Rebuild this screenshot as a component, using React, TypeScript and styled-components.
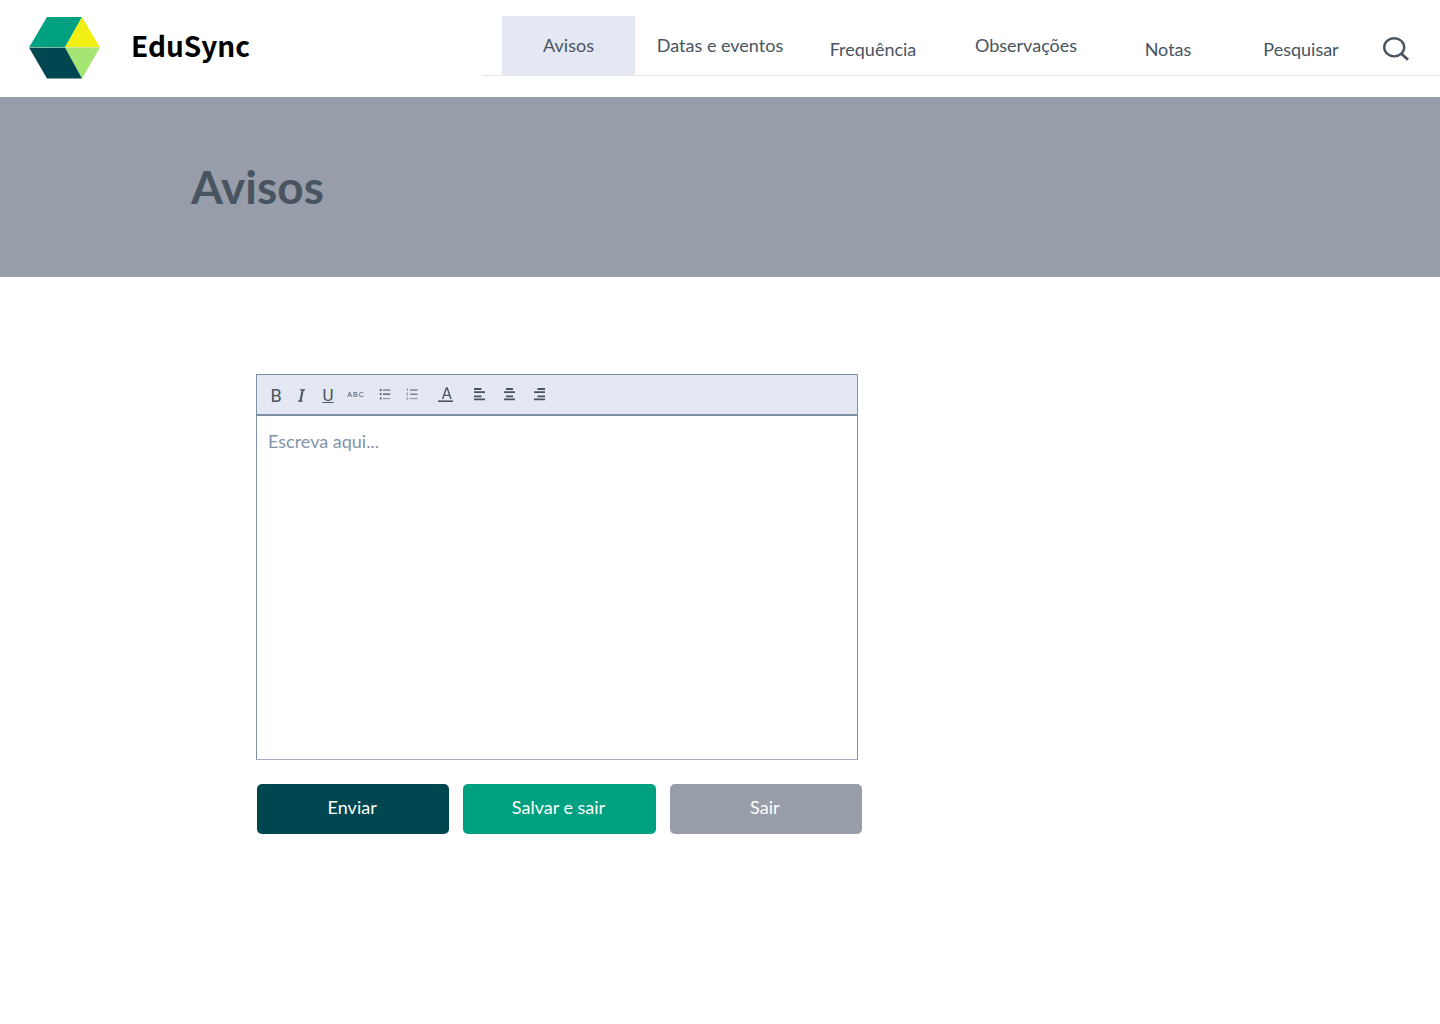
import React from "react";
import styled, { createGlobalStyle } from "styled-components";

const ink = "#485460";
const slate = "#979da9";
const mist = "#e4e8f2";

const GlobalStyle = createGlobalStyle`
  *, *::before, *::after { box-sizing: border-box; }
  body {
    margin: 0;
    background: #fff;
    color: ${ink};
    font-family: Lato, "Liberation Sans", sans-serif;
    font-size: 18px;
    line-height: 24px;
  }
  button, textarea { font: inherit; }
`;

const Header = styled.header`
  display: flex;
  align-items: flex-start;
  height: 97px;
  padding-top: 16px;
`;

const Brand = styled.a`
  display: flex;
  align-items: center;
  flex: 0 1 483px;
  gap: 31px;
  padding-left: 29px;
  color: #000;
  text-decoration: none;
`;

const BrandName = styled.span`
  font-family: "Noto Sans CJK SC", "Noto Sans", sans-serif;
  font-size: 28px;
  font-weight: 700;
  line-height: 40px;
  padding-bottom: 6px;
`;

const Nav = styled.nav`
  flex: 1;
  display: grid;
  grid-template-columns: 133fr 170fr 136fr 170fr 114fr 152fr 63fr;
  height: 60px;
  padding-left: 19px;
  border-bottom: 1px solid ${mist};
`;

const NavLink = styled.a<{ $active?: boolean; $low?: boolean }>`
  display: flex;
  align-items: center;
  justify-content: center;
  padding: ${(p) => (p.$low ? "6px 0 0" : "0 0 2px")};
  background: ${(p) => (p.$active ? mist : "transparent")};
  color: ${ink};
  text-decoration: none;
  white-space: nowrap;
`;

const SearchButton = styled.button`
  display: flex;
  align-items: center;
  padding: 6px 0 0 6px;
  border: 0;
  background: none;
  color: ${ink};
  cursor: pointer;
`;

const Banner = styled.section`
  display: flex;
  align-items: center;
  height: 180px;
  padding: 0 191px;
  background: ${slate};
`;

const Title = styled.h1`
  margin: 0;
  font-size: 46px;
  font-weight: 700;
  line-height: 56px;
`;

const Main = styled.main`
  padding: 97px 24px 48px 256px;
`;

const Editor = styled.form`
  display: flex;
  flex-direction: column;
  max-width: 606px;
`;

const Toolbar = styled.div`
  display: flex;
  align-items: center;
  width: 602px;
  max-width: 100%;
  height: 41px;
  padding: 0 0 2px 6px;
  border: 1px solid #7c90a6;
  background: ${mist};
`;

const Tool = styled.button<{ $width: number }>`
  display: flex;
  align-items: center;
  justify-content: center;
  flex: 0 0 ${(p) => p.$width}px;
  height: 32px;
  padding: 0;
  border: 0;
  background: none;
  color: ${ink};
  cursor: pointer;
`;

const Letter = styled.span<{ $underline?: boolean }>`
  font-family: Roboto, "Liberation Sans", sans-serif;
  font-size: ${(p) => (p.$underline ? 17 : 18)}px;
  line-height: 16px;
  padding-top: ${(p) => (p.$underline ? 2 : 4)}px;
  text-decoration: ${(p) => (p.$underline ? "underline" : "none")};
  text-decoration-thickness: 1px;
  text-underline-offset: 1px;
`;

const Spelling = styled.span`
  font-family: "Liberation Sans", sans-serif;
  font-size: 7px;
  line-height: 8px;
  letter-spacing: 1px;
  padding-top: 2px;
`;

const Message = styled.textarea`
  width: 602px;
  max-width: 100%;
  height: 345px;
  padding: 13px 11px;
  border: 1px solid #7c90a6;
  border-bottom-color: #a3adbf;
  border-radius: 0;
  background: #fff;
  color: ${ink};
  resize: none;
  outline: none;
  &::placeholder { color: #8294a8; opacity: 1; }
`;

const Actions = styled.div`
  display: flex;
  gap: 14px;
  margin-top: 24px;
  padding-left: 1px;
`;

const Action = styled.button<{ $color: string }>`
  flex: 1 1 0;
  height: 50px;
  padding: 0 2px 4px 0;
  border: 0;
  border-radius: 5px;
  background: ${(p) => p.$color};
  color: #fff;
  cursor: pointer;
`;

const Logo = () => (
  <svg width="71" height="63" viewBox="0 0 71 63" aria-hidden="true">
    <path d="M18 1H53L36 31.5H0Z" fill="#00a180" />
    <path d="M53 1L71 31.5H36Z" fill="#f2ef12" />
    <path d="M36 31.5H71L53 62.5Z" fill="#a5e573" />
    <path d="M0 31.5H36L53 62.5H18Z" fill="#004650" />
    <path d="M0 31.5H71" stroke="#d5e8c8" strokeOpacity="0.45" />
  </svg>
);

const SearchIcon = () => (
  <svg width="26" height="24" viewBox="0 0 26 24" fill="none" stroke="currentColor" strokeWidth="2.4" aria-hidden="true">
    <ellipse cx="11.2" cy="10.3" rx="10" ry="9.1" />
    <path d="M18.4 16.7L25 22.8" strokeWidth="2.8" />
  </svg>
);

const ItalicIcon = () => (
  <svg width="8" height="16" viewBox="0 0 8 16" fill="none" stroke="currentColor" aria-hidden="true">
    <path d="M2 3.8H7M0 15.2H4.6" strokeWidth="1.2" />
    <path d="M4.8 3.8L2.4 15.2" strokeWidth="2" />
  </svg>
);

const BulletIcon = () => (
  <svg width="12" height="12" viewBox="0 0 12 12" fill="currentColor" aria-hidden="true">
    <circle cx="1.7" cy="2" r="1.1" />
    <circle cx="1.7" cy="6" r="1.1" />
    <circle cx="1.7" cy="10.5" r="1" />
    <path d="M4 1.5H11.3V2.5H4ZM4 5.6H11.3V6.7H4Z" />
    <path d="M4 10.1H11.3V11.1H4Z" opacity="0.65" />
  </svg>
);

const NumberedIcon = () => (
  <svg width="12" height="12" viewBox="0 0 12 12" fill="none" stroke="currentColor" aria-hidden="true">
    <path d="M0.7 0.8H1.5V3M0.6 5H1.9L0.8 7H2M0.6 9.5H1.8V11.5H0.6" strokeWidth="0.5" />
    <path d="M4 2H11.5M4 6.2H11.5" />
    <path d="M4 10.6H11.5" opacity="0.6" />
  </svg>
);

const ColorIcon = () => (
  <svg width="15" height="16" viewBox="0 0 15 16" fill="none" stroke="currentColor" aria-hidden="true">
    <path d="M4.6 13L8.4 2H9.2L13 13M5.8 9.4H11.8" strokeWidth="1.4" />
    <path d="M0 15.2H15" strokeWidth="1.6" />
  </svg>
);

const alignPaths = {
  left: "M0 2H7.5M0 5.2H11M0 9.3H7.5M0 12.3H11",
  center: "M2 2H9M0 5.2H11M2 9.3H9M0 12.3H11",
  right: "M3.5 2H11M0 5.2H11M3.5 9.3H11M0 12.3H11",
};

const AlignIcon = ({ side }: { side: keyof typeof alignPaths }) => (
  <svg width="11" height="14" viewBox="0 0 11 14" fill="none" stroke="currentColor" strokeWidth="1.8" aria-hidden="true">
    <path d={alignPaths[side]} />
  </svg>
);

const links = [
  { label: "Avisos", active: true },
  { label: "Datas e eventos" },
  { label: "Frequência", low: true },
  { label: "Observações" },
  { label: "Notas", low: true },
  { label: "Pesquisar", low: true },
];

const tools = [
  { name: "Negrito", width: 26, icon: <Letter>B</Letter> },
  { name: "Itálico", width: 26, icon: <ItalicIcon /> },
  { name: "Sublinhado", width: 26, icon: <Letter $underline>U</Letter> },
  { name: "Ortografia", width: 30, icon: <Spelling>ABC</Spelling> },
  { name: "Lista", width: 28, icon: <BulletIcon /> },
  { name: "Lista numerada", width: 26, icon: <NumberedIcon /> },
  { name: "Cor do texto", width: 40, icon: <ColorIcon /> },
  { name: "Alinhar à esquerda", width: 28, icon: <AlignIcon side="left" /> },
  { name: "Centralizar", width: 32, icon: <AlignIcon side="center" /> },
  { name: "Alinhar à direita", width: 28, icon: <AlignIcon side="right" /> },
];

export default function App() {
  return (
    <>
      <GlobalStyle />
      <Header>
        <Brand href="#">
          <Logo />
          <BrandName>EduSync</BrandName>
        </Brand>
        <Nav>
          {links.map((l) => (
            <NavLink key={l.label} href="#" $active={l.active} $low={l.low}>
              {l.label}
            </NavLink>
          ))}
          <SearchButton type="button" aria-label="Pesquisar">
            <SearchIcon />
          </SearchButton>
        </Nav>
      </Header>
      <Banner>
        <Title>Avisos</Title>
      </Banner>
      <Main>
        <Editor onSubmit={(e) => e.preventDefault()}>
          <Toolbar role="toolbar" aria-label="Formatação">
            {tools.map((t) => (
              <Tool key={t.name} type="button" aria-label={t.name} $width={t.width}>
                {t.icon}
              </Tool>
            ))}
          </Toolbar>
          <Message aria-label="Aviso" placeholder="Escreva aqui..." />
          <Actions>
            <Action type="submit" $color="#004650">Enviar</Action>
            <Action type="button" $color="#00a180">Salvar e sair</Action>
            <Action type="button" $color={slate}>Sair</Action>
          </Actions>
        </Editor>
      </Main>
    </>
  );
}
